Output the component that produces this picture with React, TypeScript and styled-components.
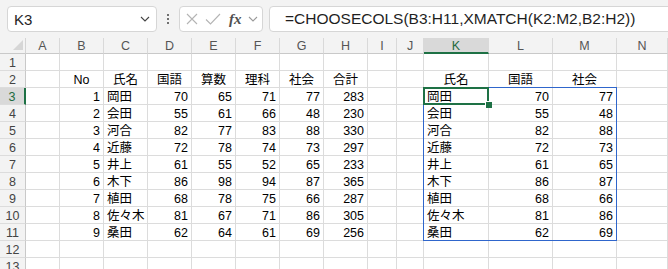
import { FC } from 'react'
import styled, { createGlobalStyle, css } from 'styled-components'

const GlobalStyle = createGlobalStyle`
   html, body {
      margin: 0;
      padding: 0;
      background: #ffffff;
   }
   body {
      font-family: 'Liberation Sans', 'Noto Sans CJK JP', sans-serif;
   }
`

const COLS = ['A', 'B', 'C', 'D', 'E', 'F', 'G', 'H', 'I', 'J', 'K', 'L', 'M', 'N']
const WIDTHS = [34, 44, 44, 44, 44, 44, 44, 44, 29, 27, 65, 64, 64, 51]
const ROW_COUNT = 13

type Rec = [number, string, number, number, number, number, number]

const DATA: Rec[] = [
   [1, '岡田', 70, 65, 71, 77, 283],
   [2, '会田', 55, 61, 66, 48, 230],
   [3, '河合', 82, 77, 83, 88, 330],
   [4, '近藤', 72, 78, 74, 73, 297],
   [5, '井上', 61, 55, 52, 65, 233],
   [6, '木下', 86, 98, 94, 87, 365],
   [7, '植田', 68, 78, 75, 66, 287],
   [8, '佐々木', 81, 67, 71, 86, 305],
   [9, '桑田', 62, 64, 61, 69, 256],
]

const HEAD = ['No', '氏名', '国語', '算数', '理科', '社会', '合計']
const SPILL_HEAD = ['氏名', '国語', '社会']

type Align = 'left' | 'right' | 'center'
type CellVal = { text: string; align: Align } | null

// sheet contents keyed by row number then column letter
const cellAt = (row: number, col: string): CellVal => {
   if (row === 2) {
      const i = 'BCDEFGH'.indexOf(col)
      if (i >= 0) return { text: HEAD[i], align: 'center' }
      const k = 'KLM'.indexOf(col)
      if (k >= 0) return { text: SPILL_HEAD[k], align: 'center' }
      return null
   }
   const r = DATA[row - 3]
   if (!r) return null
   const i = 'BCDEFGH'.indexOf(col)
   if (i >= 0) return { text: String(r[i]), align: i === 1 ? 'left' : 'right' }
   if (col === 'K') return { text: r[1], align: 'left' }
   if (col === 'L') return { text: String(r[2]), align: 'right' }
   if (col === 'M') return { text: String(r[5]), align: 'right' }
   return null
}

const App: FC = () => {
   const rows = Array.from({ length: ROW_COUNT }, (_, i) => i + 1)
   return (
      <Page>
         <GlobalStyle />
         <Toolbar>
            <NameBox>
               <span>K3</span>
               <Chevron viewBox="0 0 10 6">
                  <path d="M1 1l4 4 4-4" />
               </Chevron>
            </NameBox>
            <Dots>
               <i />
               <i />
               <i />
            </Dots>
            <FuncBox>
               <Glyph viewBox="0 0 12 12" width={12} height={12}>
                  <path d="M1 1l10 10M11 1L1 11" />
               </Glyph>
               <Glyph viewBox="0 0 16 12" width={16} height={12}>
                  <path d="M1 6.5l4.5 4.5L15 1" />
               </Glyph>
               <Fx>fx</Fx>
               <Chevron viewBox="0 0 10 6" $light>
                  <path d="M1 1l4 4 4-4" />
               </Chevron>
            </FuncBox>
            <FormulaBox>=CHOOSECOLS(B3:H11,XMATCH(K2:M2,B2:H2))</FormulaBox>
         </Toolbar>
         <Sheet>
            <Corner>
               <svg width="10" height="10" viewBox="0 0 10 10">
                  <path d="M10 0V10H0Z" fill="#d6d6d6" />
               </svg>
            </Corner>
            {COLS.map((c, i) => (
               <ColHead key={c} $col={i + 2} $active={c === 'K'}>
                  {c}
               </ColHead>
            ))}
            {rows.map(r => (
               <Row key={r} r={r} />
            ))}
            <Spill />
            <Selection>
               <Handle />
            </Selection>
         </Sheet>
      </Page>
   )
}

const Row: FC<{ r: number }> = ({ r }) => (
   <>
      <RowHead $row={r + 1} $active={r === 3}>
         {r}
      </RowHead>
      {COLS.map((c, i) => {
         const v = cellAt(r, c)
         return (
            <Cell key={c} $row={r + 1} $col={i + 2} $align={v?.align ?? 'left'}>
               {v?.text}
            </Cell>
         )
      })}
   </>
)

const Page = styled.div`
   width: 668px;
   height: 269px;
   overflow: hidden;
   background: #ffffff;
`

const Toolbar = styled.div`
   height: 38px;
   box-sizing: border-box;
   background: #f3f3f3;
   display: flex;
   align-items: flex-start;
   padding: 6px 0 0 7px;
`

const boxStyle = css`
   height: 26px;
   box-sizing: border-box;
   background: #ffffff;
   border: 1px solid #d6d6d6;
   border-radius: 4px;
   display: flex;
   align-items: center;
`

const NameBox = styled.div`
   ${boxStyle};
   width: 150px;
   padding: 0 6px 0 6px;
   justify-content: space-between;
   font-size: 15px;
   color: #1f1f1f;
`

const Chevron = styled.svg<{ $light?: boolean }>`
   width: 10px;
   height: 6px;
   fill: none;
   stroke: ${p => (p.$light ? '#9a9a9a' : '#444444')};
   stroke-width: 1.1;
`

const Dots = styled.div`
   width: 22px;
   height: 26px;
   display: flex;
   flex-direction: column;
   align-items: center;
   justify-content: center;
   gap: 2px;

   i {
      width: 2px;
      height: 2px;
      border-radius: 1px;
      background: #444444;
   }
`

const FuncBox = styled.div`
   ${boxStyle};
   width: 84px;
   padding: 0 4px 0 6px;
   justify-content: space-between;
`

const Glyph = styled.svg`
   fill: none;
   stroke: #b4b4b4;
   stroke-width: 1.1;
`

const Fx = styled.span`
   font-family: 'Liberation Serif', serif;
   font-style: italic;
   font-weight: bold;
   font-size: 15px;
   color: #505050;
   margin-left: 2px;
`

const FormulaBox = styled.div`
   ${boxStyle};
   flex: 1;
   margin: 0 -10px 0 6px;
   padding-left: 15px;
   font-size: 15.5px;
   color: #1f1f1f;
   white-space: nowrap;
`

const Sheet = styled.div`
   display: grid;
   grid-template-columns: 26px ${WIDTHS.map(w => `${w}px`).join(' ')};
   grid-template-rows: 16px repeat(${ROW_COUNT}, 17px);
   background: #ffffff;
`

const Corner = styled.div`
   grid-column: 1;
   grid-row: 1;
   background: #f3f3f3;
   border-right: 1px solid #d4d4d4;
   border-bottom: 1px solid #c9c9c9;
   display: flex;
   align-items: flex-end;
   justify-content: flex-end;
   padding: 0 2px 3px 0;
`

const headStyle = css<{ $active?: boolean }>`
   box-sizing: border-box;
   background: ${p => (p.$active ? '#d9d9d9' : '#f3f3f3')};
   color: ${p => (p.$active ? '#1e6b40' : '#555555')};
   font-size: 12.5px;
   display: flex;
   align-items: center;
   justify-content: center;
`

const ColHead = styled.div<{ $active?: boolean; $col: number }>`
   ${headStyle};
   grid-row: 1;
   grid-column: ${p => p.$col};
   border-right: 1px solid #d9d9d9;
   border-bottom: ${p => (p.$active ? '2px solid #1e7145' : '1px solid #c9c9c9')};
   padding-top: 1px;
`

const RowHead = styled.div<{ $active?: boolean; $row: number }>`
   ${headStyle};
   grid-column: 1;
   grid-row: ${p => p.$row};
   border-bottom: 1px solid #dcdcdc;
   border-right: ${p => (p.$active ? '2px solid #1e7145' : '1px solid #c9c9c9')};
   color: ${p => (p.$active ? '#1e6b40' : '#444444')};
   padding-top: 2px;
`

const Cell = styled.div<{ $align: Align; $row: number; $col: number }>`
   grid-row: ${p => p.$row};
   grid-column: ${p => p.$col};
   box-sizing: border-box;
   border-right: 1px solid #dcdcdc;
   border-bottom: 1px solid #dcdcdc;
   font-size: 12.5px;
   line-height: 16px;
   color: #000000;
   padding: 1px 3px 0;
   text-align: ${p => p.$align};
   white-space: nowrap;
`

const Spill = styled.div`
   grid-column: 12 / 15;
   grid-row: 4 / 13;
   margin: -1px 0 0 -1px;
   border: 1px solid #2f66cc;
   pointer-events: none;
`

const Selection = styled.div`
   grid-column: 12 / 13;
   grid-row: 4 / 5;
   position: relative;
   margin: -1px 0 0 -1px;
   border: 2px solid #1e7145;
   pointer-events: none;
`

const Handle = styled.div`
   position: absolute;
   right: -5px;
   bottom: -5px;
   width: 6px;
   height: 6px;
   background: #1e7145;
   border: 1px solid #ffffff;
   border-width: 1px 0 0 1px;
`

export default App
